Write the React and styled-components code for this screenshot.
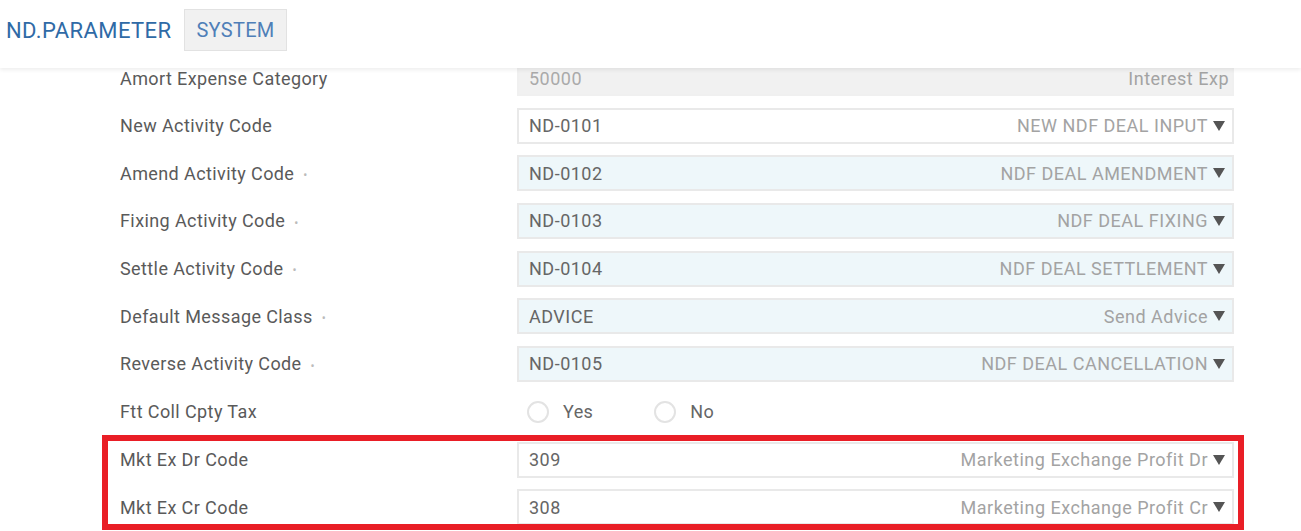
import React from 'react';
import styled, { createGlobalStyle } from 'styled-components';

const GlobalStyle = createGlobalStyle`
  body {
    margin: 0;
    background: #fff;
    font-family: Roboto, "Liberation Sans", sans-serif;
    overflow: hidden;
  }
`;

const Page = styled.div`
  width: 1301px;
  height: 531px;
  overflow: hidden;
  background: #fff;
`;

const Header = styled.div`
  position: relative;
  z-index: 2;
  height: 68px;
  box-sizing: border-box;
  padding: 0 0 8px 6px;
  display: flex;
  align-items: center;
  gap: 13px;
  background: #fff;
  box-shadow: 0 2px 4px rgba(0, 0, 0, 0.07);
`;

const Title = styled.div`
  font-size: 22px;
  color: #2f6aa6;
  letter-spacing: 0.4px;
`;

const Tab = styled.div`
  height: 40px;
  padding: 0 11px;
  display: flex;
  align-items: center;
  background: #f1f1f1;
  border: 1px solid #e2e2e2;
  font-size: 20px;
  color: #4f7fb8;
  letter-spacing: 0.3px;
`;

const Form = styled.div`
  margin-top: -8px;
  margin-left: 102px;
  width: 1142px;
  display: flex;
  flex-direction: column;
  gap: 11.67px;
`;

const Row = styled.div`
  height: 36px;
  display: flex;
  align-items: center;
  padding: 0 10px 0 18px;
`;

const Label = styled.div`
  width: 397px;
  flex-shrink: 0;
  font-size: 18px;
  color: #5a5a5a;
  letter-spacing: 0.4px;
`;

const Required = styled.span`
  color: #bbb;
  font-size: 12px;
  margin-left: 9px;
  vertical-align: middle;
`;

const Field = styled.div`
  flex: 1;
  height: 36px;
  box-sizing: border-box;
  display: flex;
  align-items: center;
  justify-content: space-between;
  padding: 0 ${(p) => (p.$variant === 'disabled' ? '3px' : '7px')} 0 10px;
  border: 2px solid ${(p) => (p.$variant === 'disabled' ? '#f0f0f0' : '#e9e9e9')};
  background: ${(p) =>
    p.$variant === 'disabled' ? '#f1f1f1' : p.$variant === 'required' ? '#eef7fa' : '#fff'};
  font-size: 18px;
  letter-spacing: 0.5px;
`;

const Value = styled.span`
  color: ${(p) => (p.$muted ? '#aaa' : '#666')};
`;

const Desc = styled.span`
  display: flex;
  align-items: center;
  gap: 5px;
  color: #a3a3a3;
`;

const Caret = styled.span`
  width: 0;
  height: 0;
  border-left: 6.5px solid transparent;
  border-right: 6.5px solid transparent;
  border-top: 10px solid #555;
`;

const RadioGroup = styled.div`
  display: flex;
  align-items: center;
  padding-left: 10px;
`;

const RadioOption = styled.label`
  display: flex;
  align-items: center;
  gap: 14px;
  margin-right: 61px;
  font-size: 18px;
  letter-spacing: 0.4px;
  color: #666;
`;

const RadioCircle = styled.span`
  width: 18px;
  height: 18px;
  border-radius: 50%;
  border: 2px solid #e3e3e3;
  background: #fff;
`;

const Highlight = styled.div`
  margin-top: -6.67px;
  padding: 7px 0 5px;
  display: flex;
  flex-direction: column;
  gap: 11.67px;
  outline: 6px solid #e91e26;
  outline-offset: -6px;
  position: relative;
  z-index: 1;
`;

const rows = [
  { label: 'Amort Expense Category', code: '50000', desc: 'Interest Exp', variant: 'disabled' },
  { label: 'New Activity Code', code: 'ND-0101', desc: 'NEW NDF DEAL INPUT', select: true },
  { label: 'Amend Activity Code', code: 'ND-0102', desc: 'NDF DEAL AMENDMENT', select: true, req: true },
  { label: 'Fixing Activity Code', code: 'ND-0103', desc: 'NDF DEAL FIXING', select: true, req: true },
  { label: 'Settle Activity Code', code: 'ND-0104', desc: 'NDF DEAL SETTLEMENT', select: true, req: true },
  { label: 'Default Message Class', code: 'ADVICE', desc: 'Send Advice', select: true, req: true },
  { label: 'Reverse Activity Code', code: 'ND-0105', desc: 'NDF DEAL CANCELLATION', select: true, req: true },
];

const marked = [
  { label: 'Mkt Ex Dr Code', code: '309', desc: 'Marketing Exchange Profit Dr', select: true },
  { label: 'Mkt Ex Cr Code', code: '308', desc: 'Marketing Exchange Profit Cr', select: true },
];

function FieldRow({ label, code, desc, select, req, variant }) {
  const v = variant || (req ? 'required' : 'plain');
  return (
    <Row>
      <Label>
        {label}
        {req && <Required>•</Required>}
      </Label>
      <Field $variant={v}>
        <Value $muted={v === 'disabled'}>{code}</Value>
        <Desc>
          {desc}
          {select && <Caret />}
        </Desc>
      </Field>
    </Row>
  );
}

export default function App() {
  return (
    <Page>
      <GlobalStyle />
      <Header>
        <Title>ND.PARAMETER</Title>
        <Tab>SYSTEM</Tab>
      </Header>
      <Form>
        {rows.map((r) => (
          <FieldRow key={r.label} {...r} />
        ))}
        <Row>
          <Label>Ftt Coll Cpty Tax</Label>
          <RadioGroup>
            <RadioOption>
              <RadioCircle />
              Yes
            </RadioOption>
            <RadioOption>
              <RadioCircle />
              No
            </RadioOption>
          </RadioGroup>
        </Row>
        <Highlight>
          {marked.map((r) => (
            <FieldRow key={r.label} {...r} />
          ))}
        </Highlight>
      </Form>
    </Page>
  );
}
